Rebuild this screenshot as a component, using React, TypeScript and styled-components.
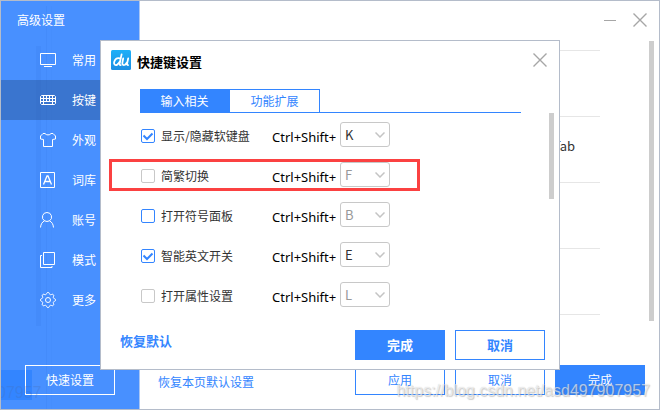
import React, { useState } from "react";
import styled, { createGlobalStyle, css } from "styled-components";

const blue = "#3385ff";
const frame = "#b4bcca";

const GlobalStyle = createGlobalStyle`
  * { box-sizing: border-box; }
  body {
    margin: 0;
    background: #fff;
    color: #333;
    font: 12px/16px "Noto Sans CJK SC", "Noto Sans", sans-serif;
  }
  button, select, input { font: inherit; margin: 0; }
`;

const Window = styled.div`
  position: relative;
  display: flex;
  min-height: 100vh;
  border: 1px solid ${frame};
  background: #fff;
  overflow: hidden;
`;

const Sidebar = styled.aside`
  display: flex;
  flex-direction: column;
  flex: 0 0 139px;
  border-right: 1px solid #a9c6f5;
  background:
    linear-gradient(${blue}, ${blue}) 0 369px / 31px 30px no-repeat,
    linear-gradient(#448bfa, #448bfa) 35px 45px / 5px 280px no-repeat,
    linear-gradient(#448bfa, #448bfa) 45px 5px / 1px 100% no-repeat,
    linear-gradient(#468efd, #468efd) 50px 5px / 1px 100% no-repeat,
    #4890ff;
  color: #fff;
`;

const SidebarTitle = styled.h1`
  margin: 0;
  padding: 11px 16px 12px;
  font-size: 12px;
  font-weight: 400;
  line-height: 16px;
`;

const NavItem = styled.button<{ $active?: boolean }>`
  display: flex;
  align-items: center;
  gap: 16px;
  width: 100%;
  height: 40px;
  padding: 0 0 0 39px;
  border: 0;
  background: ${(p) => (p.$active ? "rgba(40, 80, 140, 0.42)" : "transparent")};
  color: #fff;
  text-align: left;
  svg { flex: none; }
`;

const Button = styled.button<{ $kind: "solid" | "outline" | "ghost"; $strong?: boolean }>`
  width: 90px;
  height: 30px;
  padding: 0;
  border: 1px solid ${blue};
  background: #fff;
  color: ${blue};
  font-size: ${(p) => (p.$strong ? 13 : 12)}px;
  font-weight: ${(p) => (p.$strong ? 700 : 400)};
  ${(p) => p.$kind === "solid" && css`background: ${blue}; color: #fff;`}
  ${(p) => p.$kind === "ghost" && css`
    margin: auto 24px 14px;
    border-color: #fff;
    background: transparent;
    color: #fff;
  `}
`;

const Main = styled.main`
  display: flex;
  flex: 1;
  flex-direction: column;
`;

const TitleBar = styled.div`
  display: flex;
  align-items: center;
  justify-content: flex-end;
  gap: 17px;
  height: 40px;
  padding: 0 12px 2px;
`;

const IconButton = styled.button`
  display: flex;
  padding: 0;
  border: 0;
  background: none;
  color: #a6a6a6;
`;

const Scroller = styled.div`
  display: flex;
  flex: 1;
  justify-content: space-between;
  padding-right: 5px;
`;

const Sections = styled.div`
  flex: 1;
  margin: 0 49px 0 17px;
  padding-top: 9px;
`;

const Section = styled.section`
  height: 66px;
  padding: 20px 25px;
  border-top: 1px solid #e6e6e6;
  font-size: 13px;
  line-height: 18px;
  text-align: right;
  &:last-child { height: auto; padding-bottom: 0; }
`;

const ScrollThumb = styled.div<{ $length: number }>`
  width: 5px;
  height: ${(p) => p.$length}px;
  background: #cdcdcd;
`;

const Footer = styled.footer<{ $main?: boolean }>`
  display: flex;
  align-items: center;
  gap: 10px;
  margin-top: auto;
  padding: ${(p) => (p.$main ? "0 14px 14px 18px" : "0 14px 9px 19px")};
`;

const ResetLink = styled.a<{ $strong?: boolean }>`
  flex: 1;
  color: ${blue};
  font-size: ${(p) => (p.$strong ? 13 : 12)}px;
  font-weight: ${(p) => (p.$strong ? 700 : 400)};
  text-decoration: none;
  padding-bottom: ${(p) => (p.$strong ? 8 : 0)}px;
  padding-top: ${(p) => (p.$strong ? 0 : 4)}px;
`;

const Overlay = styled.div`
  position: absolute;
  inset: -1px;
  display: flex;
  align-items: center;
  justify-content: center;
`;

const Dialog = styled.div`
  display: flex;
  flex-direction: column;
  width: 460px;
  min-height: 330px;
  border: 1px solid ${frame};
  background: #fff;
`;

const DialogHeader = styled.header`
  display: flex;
  align-items: center;
  gap: 6px;
  height: 38px;
  margin-bottom: 10px;
  padding: 0 12px 0 10px;
`;

const DialogTitle = styled.h2`
  flex: 1;
  margin: 0;
  padding-top: 3px;
  color: #000;
  font-size: 13px;
  font-weight: 700;
  line-height: 18px;
`;

const Tabs = styled.div`
  display: flex;
  margin: 0 38px 0 39px;
  border-bottom: 1px solid ${blue};
`;

const Tab = styled.button`
  width: 90px;
  height: 23px;
  padding: 0;
  border: 1px solid ${blue};
  border-width: 1px 1px 0 0;
  background: #fff;
  color: ${blue};
  &[aria-selected="true"] {
    background: ${blue};
    color: #fff;
  }
`;

const DialogBody = styled.div`
  display: flex;
  justify-content: space-between;
  padding: 0 5px 0 39px;
`;

const Rows = styled.div`
  display: flex;
  flex-direction: column;
  gap: 15px;
  padding-top: 9px;
`;

const Row = styled.div<{ $marked?: boolean }>`
  position: relative;
  display: grid;
  grid-template-columns: 132px 68px 50px;
  align-items: center;
  height: 25px;
  ${(p) => p.$marked && css`
    &::after {
      content: "";
      position: absolute;
      inset: -3px -30px -4px -31px;
      border: 3px solid #fb4141;
      pointer-events: none;
    }
  `}
`;

const CheckLabel = styled.label`
  display: flex;
  align-items: center;
  gap: 6px;
  padding: 2px 0 0 1px;
  white-space: nowrap;
`;

const Box = styled.span`
  display: grid;
  > * { grid-area: 1 / 1; }
  svg { pointer-events: none; visibility: hidden; }
  input:checked + svg { visibility: visible; }
`;

const CheckInput = styled.input<{ $muted?: boolean }>`
  appearance: none;
  width: 14px;
  height: 14px;
  border: 1px solid ${(p) => (p.$muted ? "#c8c8c8" : blue)};
  border-radius: 2px;
  background: #fff;
`;

const Combo = styled.span`
  padding-top: 4px;
  color: #000;
  font-family: "Noto Sans", sans-serif;
  font-size: 13px;
`;

const Picker = styled.span`
  display: grid;
  align-items: center;
  > * { grid-area: 1 / 1; }
  svg { justify-self: end; margin-right: 5px; pointer-events: none; }
`;

const KeySelect = styled.select`
  appearance: none;
  width: 100%;
  height: 25px;
  padding: 0 16px 0 4px;
  border: 1px solid #c8c8c8;
  border-radius: 3px;
  background: #fff;
  color: #333;
  font-size: 13px;
  &:disabled { color: #999; opacity: 1; }
`;

const Watermark = styled.span`
  position: absolute;
  right: 9px;
  bottom: 8px;
  color: rgba(255, 255, 255, 0.6);
  font: 16px/20px "Liberation Sans", sans-serif;
  text-shadow: 1px 1px 1px rgba(100, 100, 100, 0.3), 0 0 1px rgba(100, 100, 100, 0.3);
  pointer-events: none;
`;

const WatermarkTail = styled.span`
  position: absolute;
  left: -4px;
  bottom: 6px;
  color: rgba(70, 110, 180, 0.28);
  font: 16px/20px "Liberation Sans", sans-serif;
  pointer-events: none;
`;

const Glyph = ({ children }: { children: React.ReactNode }) => (
  <svg width="16" height="16" viewBox="0 0 16 16" fill="none" stroke="#fff" aria-hidden="true">
    {children}
  </svg>
);

const Cross = () => (
  <svg width="14" height="14" viewBox="0 0 14 14" stroke="currentColor" strokeWidth="1.4" aria-hidden="true">
    <path d="M.5 .5 13.5 13.5M13.5 .5 .5 13.5" />
  </svg>
);

const Logo = () => (
  <svg width="20" height="20" viewBox="0 0 20 20" fill="none" aria-hidden="true">
    <defs>
      <linearGradient id="logo" x1="0" y1="0" x2="0" y2="1">
        <stop offset="0" stopColor="#1db0f8" />
        <stop offset="1" stopColor="#1c8fe4" />
      </linearGradient>
    </defs>
    <rect width="20" height="20" rx="1.5" fill="url(#logo)" />
    <g stroke="#fff" strokeWidth="1.8" strokeLinecap="round" strokeLinejoin="round">
      <path d="M10.6 4.4 8.6 13.6Q8.4 15.2 9.6 15.2" />
      <path d="M9 8.4C6 7.2 3.8 9.2 3.1 12.2C2.6 15 4.6 15.6 6.3 14.6Q7.7 13.6 8.6 12" />
      <path d="M12.2 8.4 11.4 12.6C11 15 12.4 15.5 14 14.7Q15.4 13.8 15.9 12.4M17.2 8.4 16.1 13.6Q15.9 15.1 17.1 15.1" />
    </g>
  </svg>
);

const gear = Array.from({ length: 64 }, (_, i) => {
  const a = (i / 64) * Math.PI * 2;
  const r = 6.7 + 0.85 * Math.tanh(2 * Math.cos(8 * a));
  return `${(8 + r * Math.cos(a)).toFixed(2)},${(8 + r * Math.sin(a)).toFixed(2)}`;
}).join(" ");

const navItems = [
  { name: "常用", icon: <path d="M.5 1.5h15v11H.5zM4 14.5h8" /> },
  {
    name: "按键",
    icon: <path d="M1.5 3.5h13l1 1v7l-1 1h-13l-1-1v-7zM.5 6.5h15M.5 9.5h15M3.5 3.5v9M6.5 3.5v6M9.5 3.5v6M12.5 3.5v9" />,
  },
  {
    name: "外观",
    icon: <path d="M5 1.5C6 3.4 10 3.4 11 1.5h2L15.5 4v3l-3 .5v7h-9v-7L.5 7V4L3 1.5z" />,
  },
  {
    name: "词库",
    icon: (
      <>
        <path d="M.5 .5h14v15H.5z" />
        <path d="M3.5 12.5 7 4h1l3.500 8.500M5 9.500h5" strokeWidth="1.3" />
      </>
    ),
  },
  {
    name: "账号",
    icon: <path d="M7 .5a4.500 4.500 0 0 1 2.500 8.300C11.800 10 13.200 12 13.500 15.500M7 .5a4.500 4.500 0 0 0-2.500 8.300C2.200 10 .8 12 .5 15.500M4.500 8.800Q7 10.200 9.500 8.800" />,
  },
  { name: "模式", icon: <path d="M3.500 .5h11v12h-11zM2 3.500H.5v12h11.500V14" /> },
  {
    name: "更多",
    icon: (
      <>
        <polygon points={gear} strokeLinejoin="round" />
        <circle cx="8" cy="8" r="2.500" />
      </>
    ),
  },
];

const shortcuts = [
  { name: "显示/隐藏软键盘", key: "K", checked: true },
  { name: "简繁切换", key: "F", checked: false, muted: true, marked: true },
  { name: "打开符号面板", key: "B", checked: false },
  { name: "智能英文开关", key: "E", checked: true },
  { name: "打开属性设置", key: "L", checked: false, muted: true },
];

const letters = "ABCDEFGHIJKLMNOPQRSTUVWXYZ".split("");

type Shortcut = { name: string; key: string; checked: boolean; muted?: boolean; marked?: boolean };

function ShortcutRow({ item }: { item: Shortcut }) {
  const [on, setOn] = useState(item.checked);
  const [key, setKey] = useState(item.key);
  return (
    <Row $marked={item.marked}>
      <CheckLabel>
        <Box>
          <CheckInput type="checkbox" $muted={item.muted} checked={on} onChange={(e) => setOn(e.target.checked)} />
          <svg width="14" height="14" viewBox="0 0 14 14" fill="none" stroke={blue} strokeWidth="2" aria-hidden="true">
            <path d="M2.500 6.500 6 10l5.500-5.500" />
          </svg>
        </Box>
        {item.name}
      </CheckLabel>
      <Combo>Ctrl+Shift+</Combo>
      <Picker>
        <KeySelect aria-label={item.name} disabled={!on} value={key} onChange={(e) => setKey(e.target.value)}>
          {letters.map((l) => (
            <option key={l}>{l}</option>
          ))}
        </KeySelect>
        <svg width="10" height="6" viewBox="0 0 10 6" fill="none" stroke="#c4c4c4" strokeWidth="1.5" aria-hidden="true">
          <path d="M.5 .5 5 5 9.500 .5" />
        </svg>
      </Picker>
    </Row>
  );
}

export default function App() {
  const [page, setPage] = useState("按键");
  const [tab, setTab] = useState("输入相关");
  return (
    <>
      <GlobalStyle />
      <Window>
        <Sidebar>
          <SidebarTitle>高级设置</SidebarTitle>
          <nav>
            {navItems.map((n) => (
              <NavItem key={n.name} $active={n.name === page} onClick={() => setPage(n.name)}>
                <Glyph>{n.icon}</Glyph>
                {n.name}
              </NavItem>
            ))}
          </nav>
          <Button $kind="ghost">快速设置</Button>
        </Sidebar>
        <Main>
          <TitleBar>
            <IconButton aria-label="最小化">
              <svg width="12" height="14" viewBox="0 0 12 14" stroke="currentColor" aria-hidden="true">
                <path d="M0 7.500h12" />
              </svg>
            </IconButton>
            <IconButton aria-label="关闭窗口">
              <Cross />
            </IconButton>
          </TitleBar>
          <Scroller>
            <Sections>
              <Section />
              <Section>Tab</Section>
              <Section />
              <Section />
              <Section />
            </Sections>
            <ScrollThumb $length={280} />
          </Scroller>
          <Footer $main>
            <ResetLink href="#reset-page">恢复本页默认设置</ResetLink>
            <Button $kind="outline">应用</Button>
            <Button $kind="outline">取消</Button>
            <Button $kind="solid">完成</Button>
          </Footer>
        </Main>
        <WatermarkTail aria-hidden="true">07957</WatermarkTail>
        <Overlay>
          <Dialog role="dialog" aria-labelledby="dialog-title">
            <DialogHeader>
              <Logo />
              <DialogTitle id="dialog-title">快捷键设置</DialogTitle>
              <IconButton aria-label="关闭">
                <Cross />
              </IconButton>
            </DialogHeader>
            <Tabs role="tablist">
              {["输入相关", "功能扩展"].map((t) => (
                <Tab key={t} role="tab" aria-selected={t === tab} onClick={() => setTab(t)}>
                  {t}
                </Tab>
              ))}
            </Tabs>
            <DialogBody>
              <Rows>
                {shortcuts.map((s) => (
                  <ShortcutRow key={s.name} item={s} />
                ))}
              </Rows>
              <ScrollThumb $length={86} />
            </DialogBody>
            <Footer>
              <ResetLink $strong href="#reset">恢复默认</ResetLink>
              <Button $kind="solid" $strong>完成</Button>
              <Button $kind="outline" $strong>取消</Button>
            </Footer>
          </Dialog>
        </Overlay>
        <Watermark>https://blog.csdn.net/asd497907957</Watermark>
      </Window>
    </>
  );
}
